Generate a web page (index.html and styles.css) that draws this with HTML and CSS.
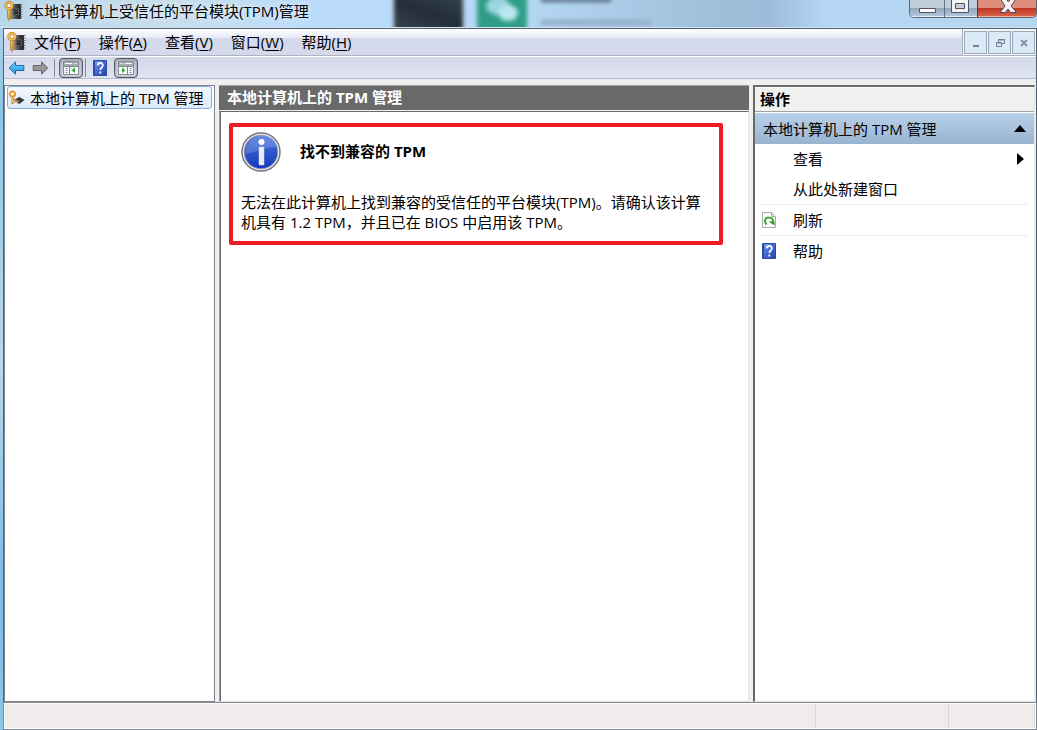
FILE: index.html
```html
<!DOCTYPE html>
<html lang="zh-CN">
<head>
<meta charset="utf-8">
<title>本地计算机上受信任的平台模块(TPM)管理</title>
<link rel="stylesheet" href="styles.css">
</head>
<body>
<svg class="defs" aria-hidden="true">
  <defs>
    <linearGradient id="gold" x1="0" x2="1" y2="1"><stop stop-color="#ffe08a"/><stop offset="1" stop-color="#b8730f"/></linearGradient>
    <linearGradient id="chipfill" x1="0" x2="1"><stop stop-color="#999b9c"/><stop offset=".6" stop-color="#3c3d3e"/><stop offset="1" stop-color="#222"/></linearGradient>
    <linearGradient id="book" x1="0" x2="1" y2="1"><stop stop-color="#7ba0ee"/><stop offset=".5" stop-color="#4267cf"/><stop offset="1" stop-color="#2647ad"/></linearGradient>
    <linearGradient id="ball" x2="0" y2="1"><stop stop-color="#5d83de"/><stop offset=".45" stop-color="#2f58c8"/><stop offset="1" stop-color="#1638c0"/></linearGradient>
    <linearGradient id="blue" x2="0" y2="1"><stop stop-color="#7ed2fa"/><stop offset="1" stop-color="#1b91e0"/></linearGradient>
    <symbol id="tpm" viewBox="0 0 20 20">
      <path d="M7 3h11v15H8z" fill="url(#chipfill)"/>
      <path d="M18.5 3v15" stroke="#777" stroke-width="2" stroke-dasharray="1 1.5"/>
      <path d="M10 7h6v7h-6z" fill="#555"/><path d="M11 12h4M12 8v5M14 8v5" stroke="#222"/>
      <path d="M4.500 8h3v9.500l-1.500 2-1.500-2z" fill="url(#gold)" stroke="#ad7018" stroke-width=".7"/>
      <path d="M7 11h2M7 14h1.500" stroke="#d59227" stroke-width="1.500"/>
      <circle cx="6" cy="4.500" r="3.200" fill="#fff" stroke="#a7680f" stroke-width="2.800"/>
      <circle cx="6" cy="4.500" r="3.200" fill="none" stroke="#f6bf57" stroke-width="1.800"/>
    </symbol>
    <symbol id="help" viewBox="0 0 14 16">
      <path d="M.5.5h13v15H.5z" fill="url(#book)" stroke="#2c49a4"/>
      <path d="M1.500 1v14" stroke="#274eb5"/>
      <path d="M4.700 5.400C5 2.200 10 2.200 9.800 5.500c0 2-2.500 2.200-2.500 4.500M7.300 11.500v2" fill="none" stroke="#fff" stroke-width="1.800"/>
    </symbol>
    <symbol id="pane" viewBox="0 0 16 14">
      <path d="M.5.5h15v13H.5z" fill="#fafafa" stroke="#858b91"/>
      <path d="M1 1h14v4H1z" fill="#a4abb1"/><path d="M2 2.500h7M11 2.500h1M13 2.500h1" stroke="#fff"/>
      <path d="M1 5.500h14M6.500 5v8" stroke="#7c858c"/><path d="M2.500 7.500h2M2.500 9.500h2M2.500 11.500h2" stroke="#5793c6"/>
      <path d="M12 6.500v5.500l-3.500-2.700z" fill="#36a72e"/>
    </symbol>
  </defs>
</svg>
<div class="window">
  <header class="titlebar">
    <div class="backdrop" aria-hidden="true">
      <span class="dark-tile"></span>
      <svg class="green-tile" viewBox="0 0 50 40"><path d="M0 0h50v40H0z" fill="#2f9d86"/><ellipse cx="21" cy="12" rx="12" ry="9" fill="#9ad6e0"/><ellipse cx="31" cy="19" rx="10" ry="8" fill="#b9e8f0"/></svg>
      <span class="haze"></span>
    </div>
    <svg class="app-icon"><use href="#tpm"/></svg>
    <h1 class="title">本地计算机上受信任的平台模块(TPM)管理</h1>
    <div class="captions">
      <button class="caption minimize" aria-label="最小化"><svg viewBox="0 0 34 17"><path d="M9.500 8.500h16v4h-16z" fill="#fff" stroke="#4c5669"/></svg></button>
      <button class="caption maximize" aria-label="最大化"><svg viewBox="0 0 32 17"><path fill-rule="evenodd" d="M6.500-2h17v14.500h-17zM10.500 3.500v5h9v-5z" fill="#f4f4f4" stroke="#4c5669"/></svg></button>
      <button class="caption close" aria-label="关闭"><svg viewBox="0 0 58 17"><path d="M22.500-1h6l2 3 2-3h5.500l-5 7 5.500 6.500h-6l-2.500-3.500-2.500 3.500h-5.500l5-6.500z" fill="#f4f4f4" stroke="#4f4a5c"/></svg></button>
    </div>
  </header>
  <div class="client">
    <div class="menubar">
      <svg class="app-icon"><use href="#tpm"/></svg>
      <nav class="menus">
        <button class="menu">文件(<u>F</u>)</button>
        <button class="menu">操作(<u>A</u>)</button>
        <button class="menu">查看(<u>V</u>)</button>
        <button class="menu">窗口(<u>W</u>)</button>
        <button class="menu">帮助(<u>H</u>)</button>
      </nav>
      <div class="mdi">
        <button class="mdi-btn" aria-label="最小化子窗口"><svg viewBox="0 0 10 10"><path d="M2 8h6" stroke="#708293" stroke-width="2"/></svg></button>
        <button class="mdi-btn" aria-label="还原子窗口"><svg viewBox="0 0 10 10"><path d="M3.500 4V1.500h6v4H7M1.500 4.500h5v4h-5zM3 2h7M1 5h6" fill="none" stroke="#708293"/></svg></button>
        <button class="mdi-btn" aria-label="关闭子窗口"><svg viewBox="0 0 10 10"><path d="M2 2l6 6M8 2L2 8" stroke="#8394a5" stroke-width="2"/></svg></button>
      </div>
    </div>
    <div class="toolbar">
      <button class="tool" aria-label="后退"><svg class="arrow" viewBox="0 0 16 14"><path d="M.7 7L7 .8v3.700h8.300v5H7v3.700z" fill="url(#blue)" stroke="#1c68b4"/></svg></button>
      <button class="tool" aria-label="前进"><svg class="arrow" viewBox="0 0 16 14"><path d="M15.300 7L9 .8v3.700H.7v5H9v3.700z" fill="#989898" stroke="#666"/></svg></button>
      <span class="separator"></span>
      <button class="tool pressed" aria-label="显示/隐藏控制台树"><svg class="pane-icon"><use href="#pane"/></svg></button>
      <span class="separator"></span>
      <button class="tool" aria-label="帮助"><svg class="help-icon"><use href="#help"/></svg></button>
      <button class="tool pressed" aria-label="显示/隐藏操作窗格"><svg class="pane-icon mirrored"><use href="#pane"/></svg></button>
    </div>
    <main class="workspace">
      <aside class="tree">
        <button class="node">
          <svg class="node-icon" viewBox="0 0 16 16"><path d="M5 10l6-3 5 3-5 4z" fill="#333b3f"/><path d="M6 12l1 1M9 13l1 1M12 13l1-1" stroke="#888"/><path d="M4 5v9M4 9l6 3" stroke="#c28734" stroke-width="2"/><circle cx="4" cy="4" r="2.600" fill="#fff" stroke="#e59b32" stroke-width="2"/><path d="M4 8v4" stroke="#f6c779"/></svg>
          <span>本地计算机上的 TPM 管理</span>
        </button>
      </aside>
      <section class="content">
        <h2 class="content-title">本地计算机上的 TPM 管理</h2>
        <div class="content-body">
          <article class="notice">
            <header class="notice-head">
              <svg class="info" viewBox="0 0 40 40"><circle cx="20" cy="20" r="19" fill="#f2f2f2" stroke="#777" stroke-width="1.500"/><circle cx="20" cy="20" r="16.800" fill="url(#ball)" stroke="#8e98af" stroke-width="1"/><path d="M4 22C5-1 35-1 36 15 25 15 15 20 4 22z" fill="#7495e5" opacity=".5"/><circle cx="20.500" cy="10" r="3" fill="#fff"/><path d="M18 15h5v18h-5z" fill="#eee" stroke="#ccd5e8" stroke-width=".5"/></svg>
              <h3 class="notice-title">找不到兼容的 TPM</h3>
            </header>
            <p class="notice-text">无法在此计算机上找到兼容的受信任的平台模块(TPM)。请确认该计算机具有 1.2 TPM，并且已在 BIOS 中启用该 TPM。</p>
          </article>
        </div>
      </section>
      <aside class="actions">
        <h2 class="actions-title">操作</h2>
        <button class="group">本地计算机上的 TPM 管理<svg class="collapse" viewBox="0 0 12 7"><path d="M0 7L6 0l6 7z"/></svg></button>
        <div class="action-list">
          <button class="action"><span class="slot"></span>查看<svg class="expand" viewBox="0 0 7 12"><path d="M0 0l7 6-7 6z"/></svg></button>
          <button class="action"><span class="slot"></span>从此处新建窗口</button>
          <button class="action ruled"><span class="slot"><svg class="refresh" viewBox="0 0 14 16"><path d="M.5.5h9l4 4v11H.5z" fill="#fbfbfb" stroke="#a7abae"/><path d="M9.500.5v4h4" fill="#ddd" stroke="#aaa"/><path d="M4.500 12.500C1 8.500 4 5 7 5.500c3.500 0 4.500 2.500 3.500 5" fill="none" stroke="#3caa35" stroke-width="2"/><path d="M6.500 9.500h6v4z" fill="#30982b"/></svg></span>刷新</button>
          <button class="action ruled"><span class="slot"><svg class="help-icon"><use href="#help"/></svg></span>帮助</button>
        </div>
      </aside>
    </main>
    <footer class="statusbar"><span></span><span></span><span></span></footer>
  </div>
</div>
</body>
</html>
```

FILE: styles.css
```css
* { box-sizing: border-box; }
body {
  margin: 0;
  color: #000;
  font: 15px/20px "Open Sans", "Noto Sans CJK SC", sans-serif;
}
h1, h2, h3, p { margin: 0; font-size: 15px; }
button {
  margin: 0;
  padding: 0;
  border: 0;
  background: none;
  color: inherit;
  font: inherit;
  text-align: left;
}
svg { display: block; flex: none; }
.defs { position: absolute; width: 0; height: 0; }
.window {
  display: flex;
  flex-direction: column;
  min-height: 100vh;
  padding-left: 3px;
  background: linear-gradient(#b4d5ef, #8cc6e8 15%, #b7d8ed 50%, #79bce8 80%, #8cc6e8);
}
.titlebar {
  position: relative;
  display: flex;
  align-items: center;
  height: 28px;
  margin-left: -3px;
  padding-left: 3px;
  overflow: hidden;
  background: linear-gradient(90deg, #b8d6ea, #c7ddea 16%, #bbdcfa 30%, #b7d8f5 50%, #9fbfdb 68%, #9dbbd8 74%, #b5d7f5 80%, #b5d6ef);
  border-bottom: 1px solid #d0e3f2;
}
.backdrop {
  position: absolute;
  inset: -6px 0;
  display: flex;
  gap: 14px;
  padding-left: 394px;
  filter: blur(2px);
}
.dark-tile { width: 69px; background: linear-gradient(20deg, #3d4850, #242d38 50%, #344450); }
.green-tile { width: 50px; height: 40px; }
.haze {
  width: 120px;
  background:
    linear-gradient(#52677c, #52677c) 0 4px / 70px 4px no-repeat,
    linear-gradient(90deg, #90aac3, #93aec8) 0 26px / 110px 5px no-repeat;
}
.app-icon { position: relative; width: 20px; height: 20px; }
.titlebar .app-icon { margin-bottom: 6px; }
.title {
  position: relative;
  flex: 1;
  padding-left: 6px;
  padding-bottom: 6px;
  font-weight: 400;
  text-shadow: 0 0 6px #fff;
}
.captions {
  position: relative;
  align-self: flex-start;
  display: flex;
  height: 18px;
  border: 1px solid #59677a;
  border-top: 0;
  border-radius: 0 0 5px 5px;
  overflow: hidden;
}
.caption { height: 17px; background: linear-gradient(#c0cfdc 45%, #94a8ba 50%, #b5cadd); box-shadow: inset 0 -1px #e1edf5; }
.caption svg { width: 100%; height: 17px; }
.minimize { width: 35px; border-right: 1px solid #637386; }
.maximize { width: 33px; border-right: 1px solid #51343d; }
.close { width: 58px; background: linear-gradient(#df8e7d 45%, #bf3621 50%, #db684e); box-shadow: inset 0 -1px #f5af93; }
.client {
  flex: 1;
  display: flex;
  flex-direction: column;
  border: 1px solid #55606e;
  background: #f0f0f0;
}
.menubar {
  display: flex;
  align-items: center;
  height: 27px;
  padding-left: 2px;
  background: linear-gradient(#fff, #e5e9f4 9px, #d4d9ec 9px);
  border-bottom: 1px solid #b1b3bf;
}
.menus { flex: 1; display: flex; gap: 18px; padding-left: 8px; }
.menu { white-space: nowrap; }
.menu u { text-underline-offset: 2px; text-decoration-thickness: 1px; }
.mdi {
  align-self: stretch;
  display: flex;
  gap: 1px;
  padding: 2px 1px 1px;
  background: #f3f6fa;
  border-left: 1px solid #abb1bb;
}
.mdi-btn {
  display: grid;
  place-items: center;
  width: 23px;
  height: 23px;
  border: 1px solid #9aa9b8;
  background: #dceaf7;
}
.mdi-btn svg { width: 10px; height: 10px; }
.toolbar {
  display: flex;
  align-items: center;
  height: 23px;
  padding-left: 4px;
  background: linear-gradient(#d3d8eb, #e0e4f3);
  border-top: 1px solid #fff;
  border-bottom: 1px solid #b6b9d3;
}
.tool { display: grid; place-items: center; width: 24px; height: 20px; }
.tool:first-child { width: 20px; place-items: center start; }
.arrow { width: 17px; height: 14px; }
.separator { width: 1px; height: 18px; margin: 0 2px; background: #858a99; }
.pressed {
  margin-left: 2px;
  border: 1px solid #565b68;
  border-radius: 4px;
  background: linear-gradient(#b5b9c7, #d6dae5);
  box-shadow: inset 0 0 2px #777;
}
.pane-icon { width: 16px; height: 14px; }
.mirrored { transform: scaleX(-1); }
.help-icon, .refresh { width: 14px; height: 16px; }
.workspace {
  flex: 1;
  display: grid;
  grid-template-columns: 211px minmax(0, 1fr) 282px;
  column-gap: 4px;
  padding: 6px 1px 0 0;
}
.tree { padding: 0 2px; border: 1px solid #828790; background: #fff; }
.node {
  display: flex;
  align-items: center;
  gap: 5px;
  width: 100%;
  height: 23px;
  border: 1px solid #84acdd;
  border-radius: 3px;
  background: linear-gradient(#f3f8fd, #dceafa);
  white-space: nowrap;
}
.node-icon { width: 17px; height: 16px; }
.content { display: flex; flex-direction: column; }
.content-title {
  height: 25px;
  padding: 1px 8px;
  background: #696969;
  border-top: 1px solid #a0a0a0;
  color: #fff;
}
.content-body {
  flex: 1;
  margin-top: 1px;
  padding: 11px 25px 10px 9px;
  border: 1px solid #e3e3e3;
  border-top-color: #696969;
  border-left-color: #a0a0a0;
  background: #fff;
  box-shadow: inset 1px 0 #696969;
}
.notice { padding: 5px 8px 9px; border: 4px solid #ed1c24; border-radius: 2px; }
.notice-head { display: flex; align-items: center; gap: 19px; }
.notice-title { padding-bottom: 2px; }
.info { width: 40px; height: 40px; }
.notice-text { padding-top: 20px; }
.actions {
  border: 1px solid #e3e3e3;
  border-top: 2px solid #696969;
  border-left: 2px solid #696969;
  background: #fff;
}
.actions-title {
  height: 25px;
  padding: 1px 5px;
  background: #f0f0f0;
  border-top: 1px solid #fff;
  border-bottom: 1px solid #a0a0a0;
}
.group {
  display: flex;
  align-items: center;
  justify-content: space-between;
  width: 100%;
  height: 32px;
  padding: 0 8px;
  border-top: 1px solid #fff;
  background: linear-gradient(#b9d1ea, #99b4d1);
}
.collapse { width: 12px; height: 7px; }
.action-list { padding: 0 6px; }
.action { display: flex; align-items: center; width: 100%; height: 30px; }
.slot { width: 32px; padding-left: 1px; }
.expand { width: 7px; height: 12px; margin-left: auto; margin-right: 4px; }
.ruled { height: 31px; border-top: 1px solid #ececec; }
.statusbar {
  display: grid;
  grid-template-columns: minmax(0, 1fr) 133px 86px;
  height: 26px;
  margin-top: 1px;
  border: 1px solid #fff;
  outline: 1px solid #828790;
  background: #f0eceb;
}
.statusbar span { border-right: 1px solid #d5d5d5; }
```
